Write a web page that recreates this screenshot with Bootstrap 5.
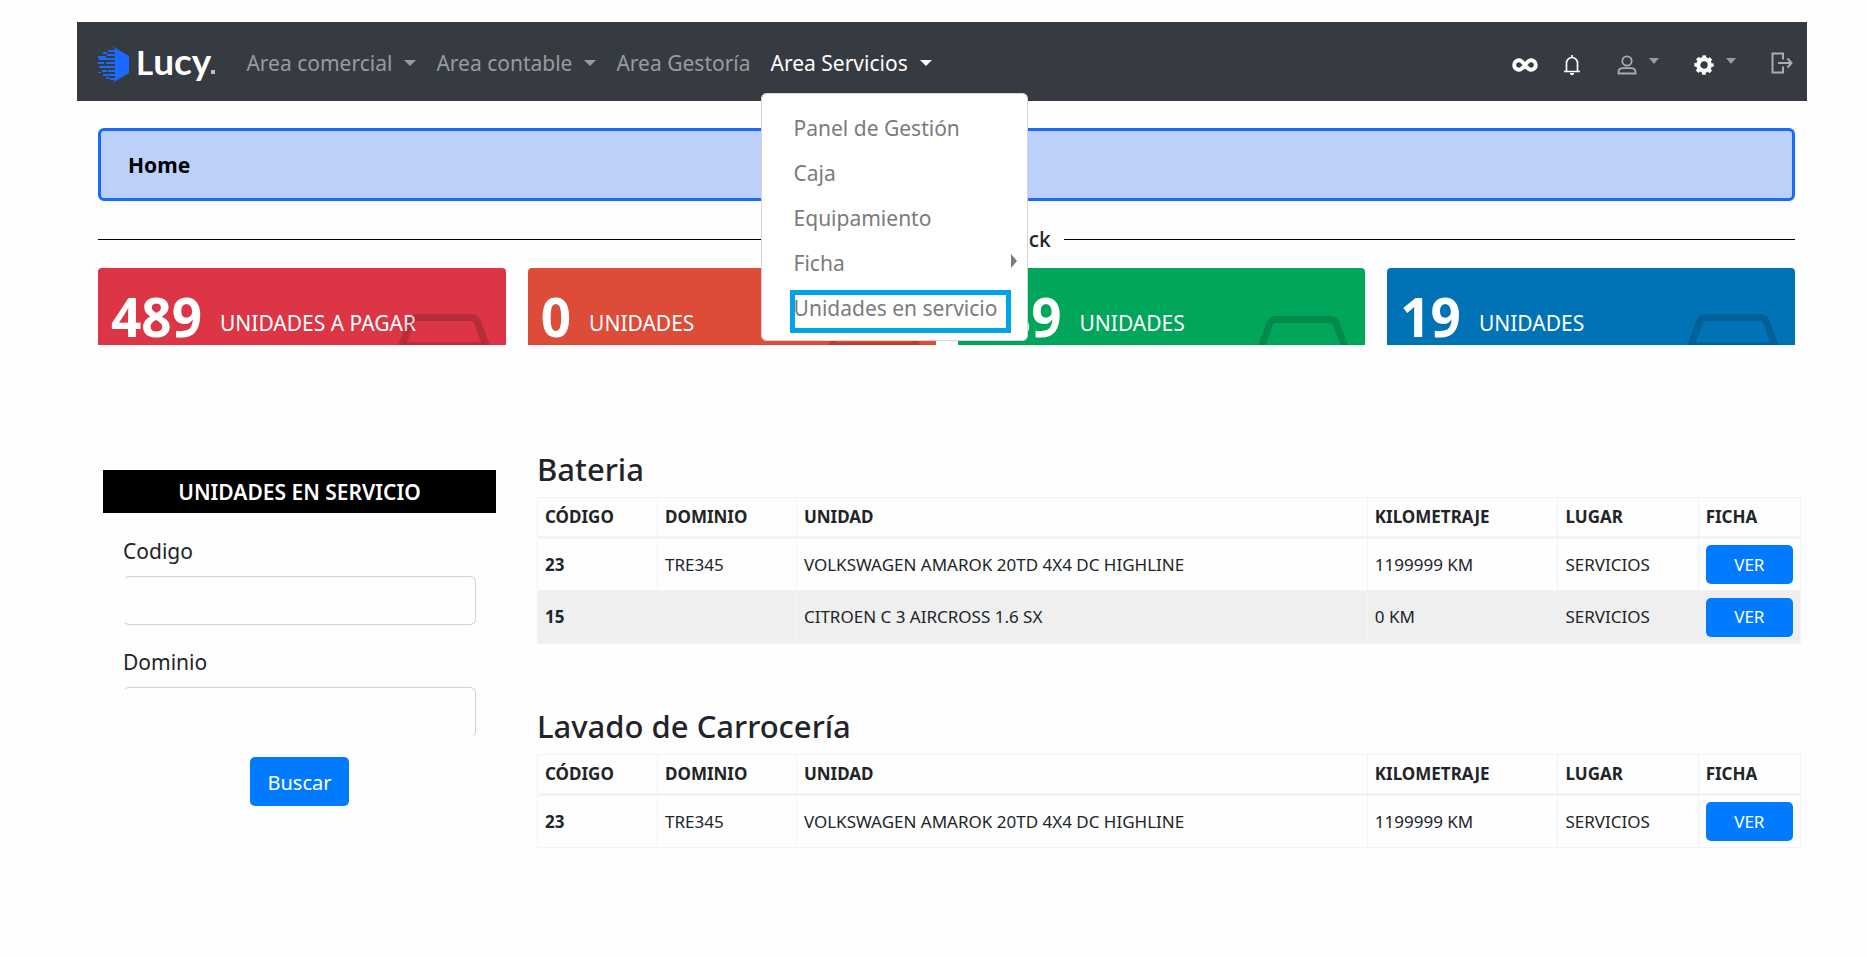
<!DOCTYPE html>
<html lang="es">
<head>
<meta charset="utf-8">
<meta name="viewport" content="width=device-width, initial-scale=1">
<title>Lucy - Unidades en servicio</title>
<link href="https://cdn.jsdelivr.net/npm/bootstrap@5.3.0/dist/css/bootstrap.min.css" rel="stylesheet">
<style>
  body { font-family: "Noto Sans", "Open Sans", sans-serif; font-size: 21px; color: #212529; background: #fefefe; }
  .page { padding: 22px 60px 40px 77px; }
  .topbar { background: #363a41; min-height: 79px; padding: 3px 14px 0 21px; }
  .brand { gap: 6px; color: #fff; font-family: Lato, sans-serif; font-weight: 700; margin-right: 21px; line-height: 40px; height: 40px; padding-top: 2px; }
  .brand-cap { font-size: 33px; }
  .brand-low { font-size: 37px; }
  .brand-dot { width: 4px; height: 4px; background: #b9bbbe; margin: 16px 0 0 -6px; }
  .topbar .navbar-nav .nav-link { color: #999b9f; padding: 8px 10px; line-height: 30px; white-space: nowrap; }
  .topbar .navbar-nav .nav-link.active { color: #fff; }
  .tri { display: inline-block; border: 6px solid transparent; border-top-color: currentColor; border-bottom: 0; margin-left: 12px; vertical-align: 5px; }
  .main-menu { min-width: 267px; padding: 12px 0 9px; border-color: #d4d4d6; border-radius: 5px; font-size: 21px; }
  .topbar .main-menu { top: 53px; left: 0; margin: 0; }
  .main-menu .dropdown-item { color: #7b7b7b; padding: 0 10px 0 32px; line-height: 45px; position: relative; }
  .tri-side { border: 7px solid transparent; border-left: 6px solid #7b7b7b; border-right: 0; margin-bottom: 6px; }
  .marked::after { content: ""; position: absolute; inset: 4px 16px -2px 28px; border: 5px solid #00a2e8; }
  .icons { color: #fff; gap: 35px; padding-top: 3px; }
  .icons button { background: none; border: 0; padding: 0; color: inherit; line-height: 1; display: flex; align-items: center; flex-shrink: 0; }
  .icons svg { flex-shrink: 0; }
  .icons .dim { color: #aaacaf; }
  .icons .exit { margin-bottom: 4px; }
  .icons .tri { margin-bottom: 7px; color: #999b9f; border-width: 6px 5px 0; }
  .content { padding: 27px 12px 0 21px; }
  .crumb { background: #bcd0fa; border: 3px solid #1a6aff; border-radius: 6px; height: 73px; padding: 3px 27px 0; font-weight: 700; color: #000; }
  .rule { border-top: 1px solid #000; height: 1px; }
  .stock { margin-top: 23px; height: 30px; font-weight: 500; gap: 13px; line-height: 30px; }
  .tiles { margin-top: 14px; gap: 22px; display: grid; grid-template-columns: repeat(4, 1fr); }
  .tile { height: 77px; border-radius: 4px 4px 0 0; color: #fff; position: relative; padding: 22px 0 1px 13px; gap: 18px; }
  .tile strong { font-size: 53px; line-height: 54px; }
  .tile span { line-height: 30px; padding-top: 11px; }
  .tile svg { position: absolute; right: 15px; bottom: 0; opacity: .16; }
  .red { background: #dc3545; } .orange { background: #dd4b39; } .green { background: #00a65a; } .blue { background: #0073b7; }
  .service { padding: 105px 6px 0 26px; gap: 41px; }
  .side { width: 393px; padding-top: 20px; }
  .side h2 { background: #000; color: #fff; font-size: 21px; font-weight: 600; line-height: 43px; margin: 0 0 23px; padding-top: 1px; height: 43px; }
  .side form { padding: 0 20px; }
  .side label { line-height: 30px; margin-bottom: 10px; display: block; }
  .side .form-control { height: 49px; border-color: #ced4da; border-left-color: transparent; border-radius: 6px; background: #fefefe; margin-bottom: 22px; }
  .side .form-control.open { height: 51px; border-bottom-color: transparent; margin-bottom: 19px; }
  .btn-blue, .btn-blue:hover { background: #007bff; color: #fff; border-radius: 5px; }
  .btn-find { width: 99px; height: 49px; padding: 2px 0 0; font-size: 20px; }
  .list h3 { font-size: 31px; font-weight: 500; line-height: 38px; margin: 0 0 9px; }
  .list .table { font-size: 17px; table-layout: fixed; border-color: #f3f3f3; margin-bottom: 63px; color: #212529; --bs-table-bg: transparent; }
  .list .table th, .list .table td { padding: 0 7px; vertical-align: middle; height: 53px; white-space: nowrap; }
  .list .table thead th { height: 40px; border-bottom: 3px solid #f3f3f3; }
  .list .table .alt > * { background: #efefef; }
  .list .btn-blue { font-size: 17px; height: 39px; width: 100%; padding: 0; display: block; }
</style>
</head>
<body>
<div class="page">
  <nav class="topbar navbar navbar-expand d-flex align-items-center">
    <a class="brand d-flex align-items-center text-decoration-none" href="#">
      <svg width="32" height="37" viewBox="0 0 32 37" fill="#1a6aff" aria-hidden="true"><path d="M14 0L31 10V27L14 37L17 34H12V32H17V30H5V28H17V26H10V24H17V22H1V20H17V18H8V16H17V14H1V12H17V10H9V8H17V6H10V4H17V3Z"/><path d="M5 6h4v2H5zM0 10h8v2H0zM0 16h6v2H0zM4 24h5v2H4zM0 26h3v1H0zM8 31h3v2H8z"/></svg>
      <span><span class="brand-cap">L</span><span class="brand-low">ucy</span></span><span class="brand-dot"></span>
    </a>
    <ul class="navbar-nav">
      <li class="nav-item"><a class="nav-link" href="#">Area comercial<span class="tri"></span></a></li>
      <li class="nav-item"><a class="nav-link" href="#">Area contable<span class="tri"></span></a></li>
      <li class="nav-item"><a class="nav-link" href="#">Area Gestoría</a></li>
      <li class="nav-item dropdown">
        <a class="nav-link active" href="#" aria-expanded="true">Area Servicios<span class="tri"></span></a>
        <ul class="dropdown-menu main-menu show">
          <li><a class="dropdown-item" href="#">Panel de Gestión</a></li>
          <li><a class="dropdown-item" href="#">Caja</a></li>
          <li><a class="dropdown-item" href="#">Equipamiento</a></li>
          <li><a class="dropdown-item d-flex justify-content-between align-items-center" href="#">Ficha<span class="tri-side"></span></a></li>
          <li><a class="dropdown-item marked" href="#">Unidades en servicio</a></li>
        </ul>
      </li>
    </ul>
    <div class="icons d-flex align-items-center ms-auto">
      <div class="d-flex align-items-center gap-4">
        <button type="button" aria-label="Enlaces"><svg width="26" height="16" viewBox="0 0 26 16" fill="none" stroke="#fff" stroke-width="4"><path d="M13 8C10.500 4.500 9 3.200 7 3.200a4.800 4.800 0 0 0 0 9.600C9 12.800 10.500 11.500 13 8S17 3.200 19 3.200a4.800 4.800 0 0 1 0 9.600C17 12.800 15.500 11.500 13 8Z"/></svg></button>
        <button type="button" aria-label="Avisos"><svg width="20" height="22" viewBox="0 0 20 22" fill="none" stroke="#fff" stroke-width="1.700"><path d="M2 17.500H18M4.500 17V9a5.500 5.500 0 0 1 11 0v8M10 1v2.500"/><path d="M8 19.500h4l-2 1.500z" fill="#fff" stroke-width="1"/></svg></button>
      </div>
      <button type="button" aria-label="Usuario" class="dim"><svg width="20" height="20" viewBox="0 0 20 20" fill="none" stroke="currentColor" stroke-width="1.800"><circle cx="10" cy="6" r="4.700"/><path d="M1.500 18.500v-1.500c0-2.500 2-3.800 4.500-3.800h8c2.500 0 4.500 1.300 4.500 3.800v1.500z"/></svg><span class="tri"></span></button>
      <button type="button" aria-label="Configuración"><svg width="20" height="20" viewBox="0 0 20 20"><circle cx="10" cy="10" r="5.800" fill="none" stroke="#fff" stroke-width="4.200"/><circle cx="10" cy="10" r="8.300" fill="none" stroke="#fff" stroke-width="2.800" stroke-dasharray="3.600 2.920" stroke-dashoffset="1.800"/></svg><span class="tri"></span></button>
      <button type="button" aria-label="Salir" class="dim exit"><svg width="22" height="22" viewBox="0 0 22 22" fill="none" stroke="currentColor" stroke-width="2"><path d="M12 7.500V1.500H1.500V20.500H12V14.500M7 11h13M16.500 6.500l4 4.500-4 4.500"/></svg></button>
    </div>
  </nav>

  <main>
    <div class="content">
      <div class="crumb d-flex align-items-center">Home</div>
      <div class="stock d-flex align-items-center"><span class="rule flex-fill"></span><span>Unidades en el Stock</span><span class="rule flex-fill"></span></div>
      <div class="tiles">
        <div class="tile red d-flex align-items-center"><svg width="94" height="31" viewBox="0 0 94 31" fill="none" stroke="#000" stroke-width="7"><path d="M4 34L14 7Q16 3.500 20 3.500H74Q78 3.500 80 7L90 34M8 32H86"/></svg><strong>489</strong><span>UNIDADES A PAGAR</span></div>
        <div class="tile orange d-flex align-items-center"><svg width="94" height="31" viewBox="0 0 94 31" fill="none" stroke="#000" stroke-width="7"><path d="M4 34L14 7Q16 3.500 20 3.500H74Q78 3.500 80 7L90 34M8 32H86"/></svg><strong>0</strong><span>UNIDADES</span></div>
        <div class="tile green d-flex align-items-center"><svg width="94" height="29" viewBox="0 0 94 29" fill="none" stroke="#000" stroke-width="7"><path d="M4 34L14 7Q16 3.500 20 3.500H74Q78 3.500 80 7L90 34"/></svg><strong>489</strong><span>UNIDADES</span></div>
        <div class="tile blue d-flex align-items-center"><svg width="94" height="31" viewBox="0 0 94 31" fill="none" stroke="#000" stroke-width="7"><path d="M4 34L14 7Q16 3.500 20 3.500H74Q78 3.500 80 7L90 34M8 32H86"/></svg><strong>19</strong><span>UNIDADES</span></div>
      </div>
    </div>

    <div class="service d-flex align-items-start">
      <section class="side flex-shrink-0">
        <h2 class="text-center">UNIDADES EN SERVICIO</h2>
        <form>
          <label for="codigo">Codigo</label>
          <input class="form-control" id="codigo" type="text">
          <label for="dominio">Dominio</label>
          <input class="form-control open" id="dominio" type="text">
          <button class="btn btn-blue btn-find d-block mx-auto" type="button">Buscar</button>
        </form>
      </section>
      <section class="list flex-fill">
        <h3>Bateria</h3>
        <table class="table table-bordered">
          <colgroup><col style="width:9.500%"><col style="width:11%"><col style="width:45.200%"><col style="width:15.100%"><col style="width:11.100%"><col style="width:8.100%"></colgroup>
          <thead><tr><th>CÓDIGO</th><th>DOMINIO</th><th>UNIDAD</th><th>KILOMETRAJE</th><th>LUGAR</th><th>FICHA</th></tr></thead>
          <tbody>
            <tr><th>23</th><td>TRE345</td><td>VOLKSWAGEN AMAROK 20TD 4X4 DC HIGHLINE</td><td>1199999 KM</td><td>SERVICIOS</td><td><button class="btn btn-blue" type="button">VER</button></td></tr>
            <tr class="alt"><th>15</th><td></td><td>CITROEN C 3 AIRCROSS 1.6 SX</td><td>0 KM</td><td>SERVICIOS</td><td><button class="btn btn-blue" type="button">VER</button></td></tr>
          </tbody>
        </table>
        <h3>Lavado de Carrocería</h3>
        <table class="table table-bordered">
          <colgroup><col style="width:9.500%"><col style="width:11%"><col style="width:45.200%"><col style="width:15.100%"><col style="width:11.100%"><col style="width:8.100%"></colgroup>
          <thead><tr><th>CÓDIGO</th><th>DOMINIO</th><th>UNIDAD</th><th>KILOMETRAJE</th><th>LUGAR</th><th>FICHA</th></tr></thead>
          <tbody>
            <tr><th>23</th><td>TRE345</td><td>VOLKSWAGEN AMAROK 20TD 4X4 DC HIGHLINE</td><td>1199999 KM</td><td>SERVICIOS</td><td><button class="btn btn-blue" type="button">VER</button></td></tr>
          </tbody>
        </table>
      </section>
    </div>
  </main>
</div>
<script src="https://cdn.jsdelivr.net/npm/bootstrap@5.3.0/dist/js/bootstrap.bundle.min.js"></script>
</body>
</html>
